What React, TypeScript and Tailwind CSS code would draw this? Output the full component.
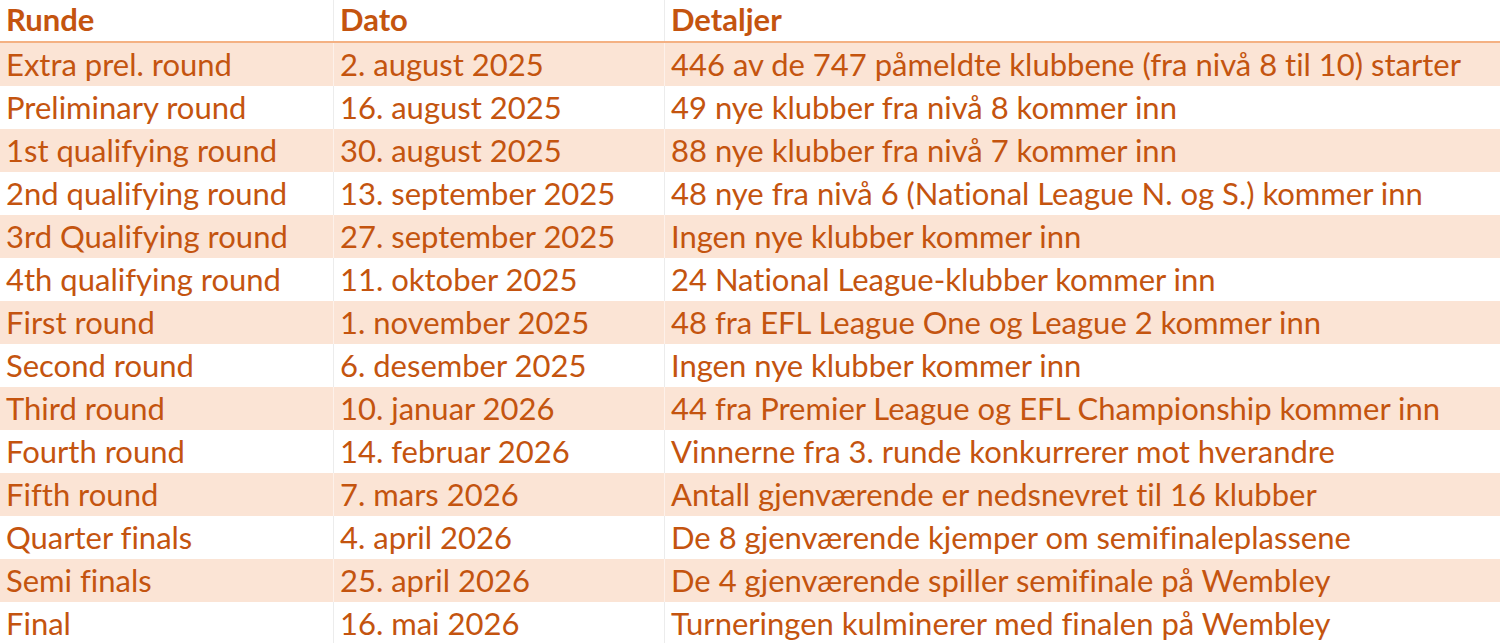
import React from 'react';

const rows = [
    ['Extra prel. round', '2. august 2025', '446 av de 747 påmeldte klubbene (fra nivå 8 til 10) starter'],
    ['Preliminary round', '16. august 2025', '49 nye klubber fra nivå 8 kommer inn'],
    ['1st qualifying round', '30. august 2025', '88 nye klubber fra nivå 7 kommer inn'],
    ['2nd qualifying round', '13. september 2025', '48 nye fra nivå 6 (National League N. og S.) kommer inn'],
    ['3rd Qualifying round', '27. september 2025', 'Ingen nye klubber kommer inn'],
    ['4th qualifying round', '11. oktober 2025', '24 National League-klubber kommer inn'],
    ['First round', '1. november 2025', '48 fra EFL League One og League 2 kommer inn'],
    ['Second round', '6. desember 2025', 'Ingen nye klubber kommer inn'],
    ['Third round', '10. januar 2026', '44 fra Premier League og EFL Championship kommer inn'],
    ['Fourth round', '14. februar 2026', 'Vinnerne fra 3. runde konkurrerer mot hverandre'],
    ['Fifth round', '7. mars 2026', 'Antall gjenværende er nedsnevret til 16 klubber'],
    ['Quarter finals', '4. april 2026', 'De 8 gjenværende kjemper om semifinaleplassene'],
    ['Semi finals', '25. april 2026', 'De 4 gjenværende spiller semifinale på Wembley'],
    ['Final', '16. mai 2026', 'Turneringen kulminerer med finalen på Wembley'],
];

export default function App() {
    return (
        <div className="w-[1500px] h-[643px] overflow-hidden bg-white text-[#c4540f] text-[31px] leading-[36px] font-['Lato',sans-serif] [font-variant-ligatures:none]">
            {/* Header */}
            <div className="grid grid-cols-[333px_331px_1fr] h-[43px] border-b-2 border-[#f4b183] font-bold">
                <div className="px-[6px] pb-[3px] flex items-center">Runde</div>
                <div className="px-[6px] pb-[3px] flex items-center border-l border-[#ececec]">Dato</div>
                <div className="px-[6px] pb-[3px] flex items-center border-l border-[#ececec]">Detaljer</div>
            </div>

            {rows.map((r, i) => {
                const shaded = i % 2 === 0;
                const line = shaded ? 'border-[#fdf1ea]' : 'border-[#ececec]';
                return (
                    <div
                        key={r[0]}
                        className={`grid grid-cols-[333px_331px_1fr] h-[43px] ${shaded ? 'bg-[#fbe4d5]' : 'bg-white'}`}
                    >
                        <div className="px-[6px] pb-[2px] flex items-center whitespace-nowrap">{r[0]}</div>
                        <div className={`px-[6px] pb-[2px] flex items-center whitespace-nowrap border-l ${line}`}>{r[1]}</div>
                        <div className={`px-[6px] pb-[2px] flex items-center whitespace-nowrap border-l ${line}`}>{r[2]}</div>
                    </div>
                );
            })}
        </div>
    );
}
